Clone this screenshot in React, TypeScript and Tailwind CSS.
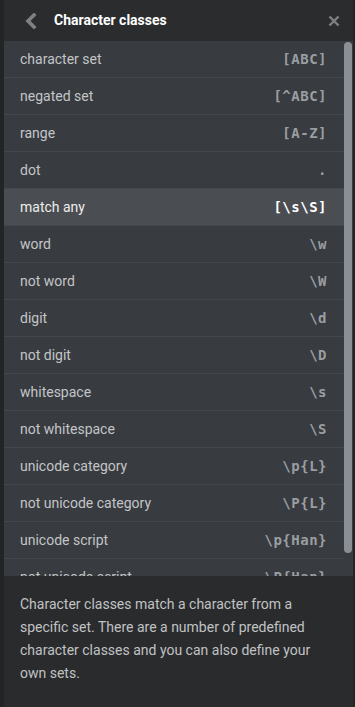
import React from "react";

const rows: [string, string][] = [
  ["character set", "[ABC]"],
  ["negated set", "[^ABC]"],
  ["range", "[A-Z]"],
  ["dot", "."],
  ["match any", "[\\s\\S]"],
  ["word", "\\w"],
  ["not word", "\\W"],
  ["digit", "\\d"],
  ["not digit", "\\D"],
  ["whitespace", "\\s"],
  ["not whitespace", "\\S"],
  ["unicode category", "\\p{L}"],
  ["not unicode category", "\\P{L}"],
  ["unicode script", "\\p{Han}"],
  ["not unicode script", "\\P{Han}"],
];

export default function App() {
  return (
    <div
      className="flex h-[707px] w-[355px] bg-[#232426]"
      style={{ fontFamily: "Roboto, 'Liberation Sans', sans-serif" }}
    >
      <div className="ml-[4px] mr-[2px] flex flex-1 flex-col overflow-hidden">
        <div className="flex h-[41px] shrink-0 items-center bg-[#2b2c2e]">
          <svg width="14" height="16" viewBox="0 0 14 16" className="ml-[20px]">
            <polyline points="10,2 4,8 10,14" fill="none" stroke="#7e8184" strokeWidth="3.6" strokeLinecap="square" />
          </svg>
          <span className="ml-[16px] text-[14px] font-bold text-white">Character classes</span>
          <svg width="12" height="12" viewBox="0 0 12 12" className="ml-auto mr-[13px]">
            <path d="M1.5 1.5 L10.5 10.5 M10.5 1.5 L1.5 10.5" stroke="#7e8184" strokeWidth="2.4" />
          </svg>
        </div>
        <div className="flex min-h-0 flex-1 bg-[#383b3f]">
          <div className="flex min-w-0 flex-1 flex-col overflow-hidden">
            {rows.map(([label, code], i) => {
              const sel = i === 4;
              return (
                <div
                  key={label}
                  className={
                    "flex h-[37px] shrink-0 items-center border-b border-[#44474b] pl-[16px] pr-[17px] " +
                    (sel ? "bg-[#4a4d51]" : "")
                  }
                >
                  <span className={"text-[14px] " + (sel ? "text-[#eeeeee]" : "text-[#c3c5c8]")}>{label}</span>
                  <span
                    className={"ml-auto text-[14px] font-bold tracking-[0.5px] " + (sel ? "text-white" : "text-[#9a9ea3]")}
                    style={{ fontFamily: "'DejaVu Sans Mono', 'Liberation Mono', monospace" }}
                  >
                    {code}
                  </span>
                </div>
              );
            })}
          </div>
          <div className="w-[9px] shrink-0 pt-[1px] pr-[1px]">
            <div className="h-[511px] rounded-[4px] bg-[#8a8f95]" />
          </div>
        </div>
        <div className="h-[131px] shrink-0 bg-[#2a2b2d] px-[16px] pt-[17px]">
          <p className="text-[14px] leading-[23px] text-[#c0c2c4]">
            Character classes match a character from a specific set. There are a number of predefined character classes and you can also define your own sets.
          </p>
        </div>
      </div>
    </div>
  );
}
